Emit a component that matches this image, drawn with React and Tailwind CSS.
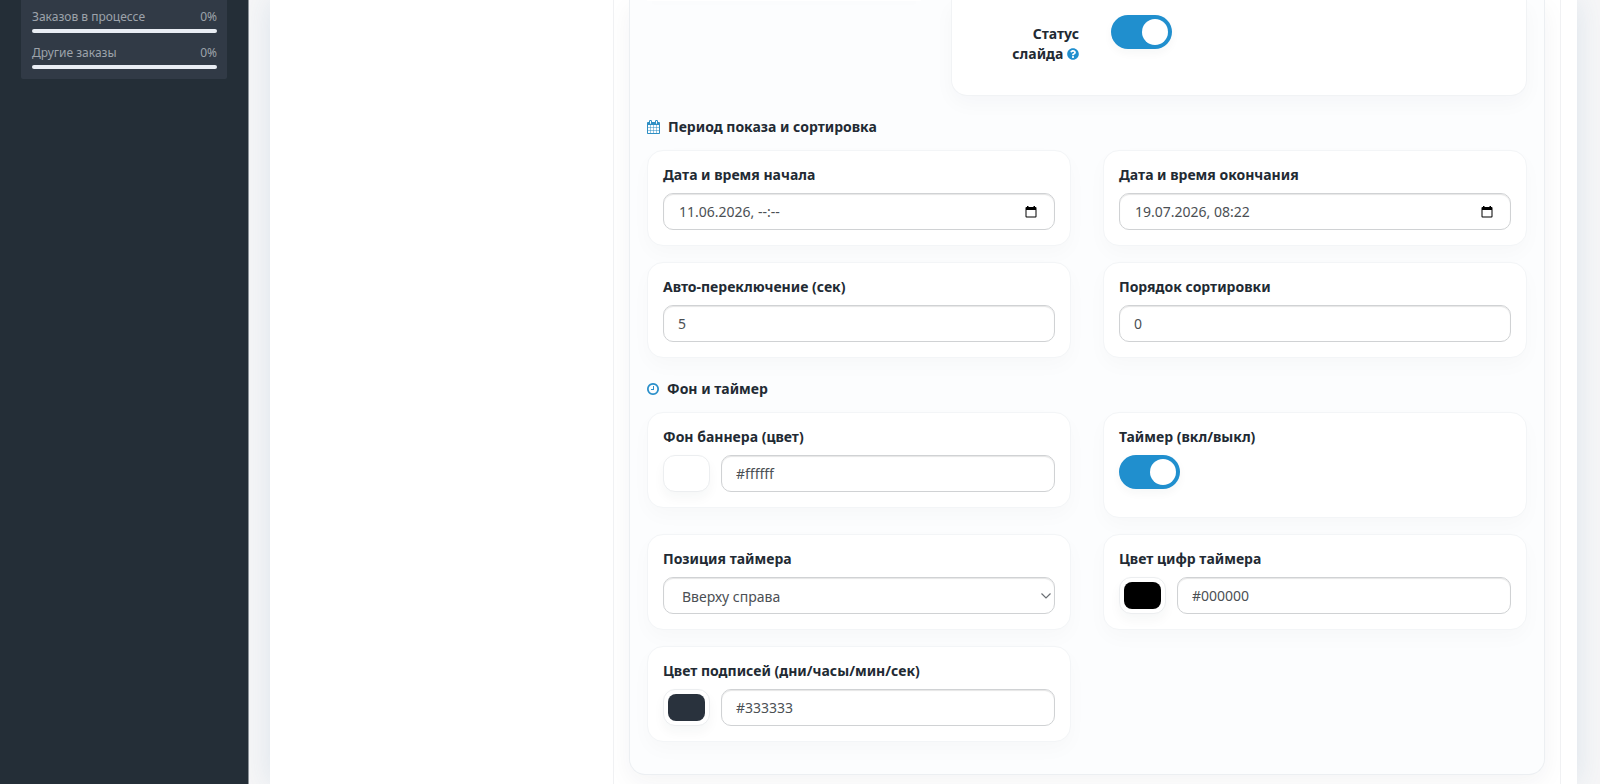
import { useState } from 'react';
import { FaQuestionCircle } from 'react-icons/fa';

const cardClass =
  'rounded-2xl border border-[#f3f5f7] bg-white px-[15px] pt-[14px] pb-[15px] shadow-[0_8px_20px_rgba(30,41,59,0.025)]';
const fieldClass =
  'h-[37px] w-full min-w-0 rounded-[10px] border border-[#d0d2d4] bg-white px-[14px] text-sm text-[#4b4f54] shadow-[inset_0_1px_1px_rgba(0,0,0,0.1)] outline-none hover:border-[#b4b6b8]';

function CalendarIcon() {
  return (
    <svg viewBox="64 0 1664 1792" className="h-[14px] w-[13px]" fill="#2f8fc4" aria-hidden="true">
      <path d="M192 1664h288v-288h-288v288zm352 0h320v-288h-320v288zm-352-352h288v-320h-288v320zm352 0h320v-320h-320v320zm-352-384h288v-288h-288v288zm736 736h320v-288h-320v288zm-384-736h320v-288h-320v288zm768 736h288v-288h-288v288zm-384-352h320v-320h-320v320zm-352-864v-288q0-13-9.500-22.500t-22.500-9.500h-64q-13 0-22.500 9.500t-9.500 22.500v288q0 13 9.500 22.500t22.500 9.500h64q13 0 22.500-9.500t9.500-22.500zm736 864h288v-320h-288v320zm-384-384h320v-288h-320v288zm384 0h288v-288h-288v288zm32-480v-288q0-13-9.500-22.500t-22.500-9.500h-64q-13 0-22.500 9.500t-9.500 22.500v288q0 13 9.500 22.500t22.500 9.500h64q13 0 22.500-9.500t9.500-22.500zm384-64v1280q0 52-38 90t-90 38h-1408q-52 0-90-38t-38-90v-1280q0-52 38-90t90-38h128v-96q0-66 47-113t113-47h64q66 0 113 47t47 113v96h384v-96q0-66 47-113t113-47h64q66 0 113 47t47 113v96h128q52 0 90 38t38 90z" />
    </svg>
  );
}

function ClockIcon() {
  return (
    <svg viewBox="128 128 1536 1536" className="h-3 w-3" fill="#2a8fca" aria-hidden="true">
      <path d="M1024 544v448q0 14-9 23t-23 9h-320q-14 0-23-9t-9-23v-64q0-14 9-23t23-9h224v-352q0-14 9-23t23-9h64q14 0 23 9t9 23zm416 352q0-148-73-273t-198-198-273-73-273 73-198 198-73 273 73 273 198 198 273 73 273-73 198-198 73-273zm224 0q0 209-103 385.500t-279.500 279.500-385.500 103-385.500-103-279.500-279.500-103-385.500 103-385.500 279.500-279.500 385.500-103 385.500 103 279.500 279.500 103 385.500z" />
    </svg>
  );
}

function Card({ id, label, children }) {
  return (
    <div className={cardClass}>
      <label htmlFor={id} className="mb-2 block text-sm leading-5 font-bold">
        {label}
      </label>
      {children}
    </div>
  );
}

function TextField({ id, value }) {
  return <input id={id} type="text" defaultValue={value} className={fieldClass} />;
}

function DateField({ id, value }) {
  return (
    <div className="flex h-[37px] items-center rounded-[10px] border border-[#d0d2d4] bg-white pr-4 pl-[15px] shadow-[inset_0_1px_1px_rgba(0,0,0,0.1)]">
      <input
        id={id}
        type="text"
        defaultValue={value}
        className="min-w-0 flex-1 bg-transparent text-sm text-[#4b4f54] outline-none"
      />
      <button type="button" aria-label="Открыть календарь">
        <svg viewBox="0 0 14 14" className="h-[14px] w-[14px]" aria-hidden="true">
          <path
            fill="#000"
            fillRule="evenodd"
            d="M3 1h1.500v1h5V1H11v1h.500a1 1 0 0 1 1 1v8.500a1 1 0 0 1-1 1h-9a1 1 0 0 1-1-1V3a1 1 0 0 1 1-1H3zM2.500 5v6.500h9V5z"
          />
        </svg>
      </button>
    </div>
  );
}

function Toggle({ id }) {
  const [on, setOn] = useState(true);
  return (
    <input
      id={id}
      type="checkbox"
      role="switch"
      checked={on}
      onChange={() => setOn(!on)}
      className="flex h-[34px] w-[61px] shrink-0 cursor-pointer appearance-none items-center rounded-full bg-[#b8c0c8] px-1 shadow-[0_4px_10px_rgba(30,41,59,0.04)] before:h-[26px] before:w-[26px] before:rounded-full before:bg-white before:content-[''] checked:justify-end checked:bg-[#208fce]"
    />
  );
}

function ColorField({ id, initial, swatch }) {
  return (
    <div className="flex gap-[11px]">
      <input
        type="color"
        aria-label="Выбрать цвет"
        defaultValue={swatch}
        className="h-[37px] w-[47px] shrink-0 cursor-pointer appearance-none rounded-xl border border-[#eceef0] bg-white p-1 shadow-[0_6px_12px_rgba(30,41,59,0.04)] [&::-webkit-color-swatch]:rounded-lg [&::-webkit-color-swatch]:border-0 [&::-webkit-color-swatch-wrapper]:p-0"
      />
      <TextField id={id} value={initial} />
    </div>
  );
}

function SectionTitle({ icon, children }) {
  return (
    <h3 className="mt-[19px] mb-[11px] flex items-center gap-2 text-sm leading-6 font-bold">
      {icon}
      {children}
    </h3>
  );
}

function Stat({ label, value }) {
  return (
    <li className="flex flex-col gap-[2px] pb-[10px] last:pb-0">
      <div className="flex justify-between text-xs leading-5 text-[#9da3ab]">
        <span>{label}</span>
        <span>{value}</span>
      </div>
      <div className="h-[4px] rounded-sm bg-[#e9edf4]" />
    </li>
  );
}

export default function App() {
  return (
    <div className="flex min-h-screen bg-[#f6f6f7] font-['Noto_Sans',sans-serif] text-[#222a33]">
      <aside className="w-[248px] shrink-0 bg-[#242e37] px-[21px] shadow-[1px_0_0_#8d9499]">
        <ul className="rounded-b-[2px] bg-[#313a46] pt-[7px] pr-[10px] pb-[10px] pl-[11px]">
          <Stat label="Заказов в процессе" value="0%" />
          <Stat label="Другие заказы" value="0%" />
        </ul>
      </aside>

      <main className="flex min-w-0 flex-1 overflow-hidden pr-[23px] pl-[22px]">
        <div className="flex min-w-0 flex-1 bg-white pr-4 shadow-[0_0_28px_rgba(50,110,160,0.13)]">
          <div className="w-[343px] shrink-0" />
          <div className="min-w-0 flex-1 overflow-hidden border-x border-[#f0f1f3] bg-white px-[15px] pb-[9px]">
            <form className="rounded-b-2xl border border-t-0 border-[#eceff2] bg-[#fcfdfe] px-[17px] pb-8 shadow-[0_8px_24px_rgba(30,41,59,0.05)]">
              <div className="flex items-start justify-between">
                <div className="h-px w-[274px] bg-white shadow-[0_2px_10px_rgba(30,41,59,0.05)]" />
                <div className="flex h-[96px] w-[576px] rounded-b-2xl border border-t-0 border-[#f1f3f5] bg-white pt-[15px] shadow-[0_8px_20px_rgba(30,41,59,0.03)]">
                  <label
                    htmlFor="slide-status"
                    className="w-[127px] pt-[9px] text-right text-sm leading-5 font-bold"
                  >
                    Статус
                    <br />
                    слайда{' '}
                    <FaQuestionCircle className="inline-block h-3 w-3 align-[-1px] text-[#208fce]" />
                  </label>
                  <div className="pl-8">
                    <Toggle id="slide-status" />
                  </div>
                </div>
              </div>

              <SectionTitle icon={<CalendarIcon />}>Период показа и сортировка</SectionTitle>
              <div className="grid grid-cols-2 gap-x-8 gap-y-4">
                <Card id="date-start" label="Дата и время начала">
                  <DateField id="date-start" value="11.06.2026, --:--" />
                </Card>
                <Card id="date-end" label="Дата и время окончания">
                  <DateField id="date-end" value="19.07.2026, 08:22" />
                </Card>
                <Card id="autoplay" label="Авто-переключение (сек)">
                  <TextField id="autoplay" value="5" />
                </Card>
                <Card id="sort-order" label="Порядок сортировки">
                  <TextField id="sort-order" value="0" />
                </Card>
              </div>

              <SectionTitle icon={<ClockIcon />}>Фон и таймер</SectionTitle>
              <div className="grid grid-cols-2 items-start gap-x-8 gap-y-4">
                <Card id="banner-bg" label="Фон баннера (цвет)">
                  <ColorField id="banner-bg" initial="#ffffff" swatch="#ffffff" />
                </Card>
                <Card id="timer" label="Таймер (вкл/выкл)">
                  <div className="pb-[13px]">
                    <Toggle id="timer" />
                  </div>
                </Card>
                <Card id="timer-position" label="Позиция таймера">
                  <div className="grid items-center">
                    <select
                      id="timer-position"
                      className={`${fieldClass} col-start-1 row-start-1 appearance-none pt-[2px] pl-[18px]`}
                    >
                      <option>Вверху справа</option>
                    </select>
                    <svg
                      viewBox="0 0 12 8"
                      className="pointer-events-none col-start-1 row-start-1 mr-[3px] h-[8px] w-[12px] justify-self-end"
                      fill="none"
                      stroke="#6b6f74"
                      strokeWidth="1.2"
                      aria-hidden="true"
                    >
                      <path d="M1.500 1.500 6 6l4.500-4.500" />
                    </svg>
                  </div>
                </Card>
                <Card id="digits-color" label="Цвет цифр таймера">
                  <ColorField id="digits-color" initial="#000000" swatch="#000000" />
                </Card>
                <Card id="caption-color" label="Цвет подписей (дни/часы/мин/сек)">
                  <ColorField id="caption-color" initial="#333333" swatch="#29323d" />
                </Card>
              </div>
            </form>
          </div>
        </div>
      </main>
    </div>
  );
}
